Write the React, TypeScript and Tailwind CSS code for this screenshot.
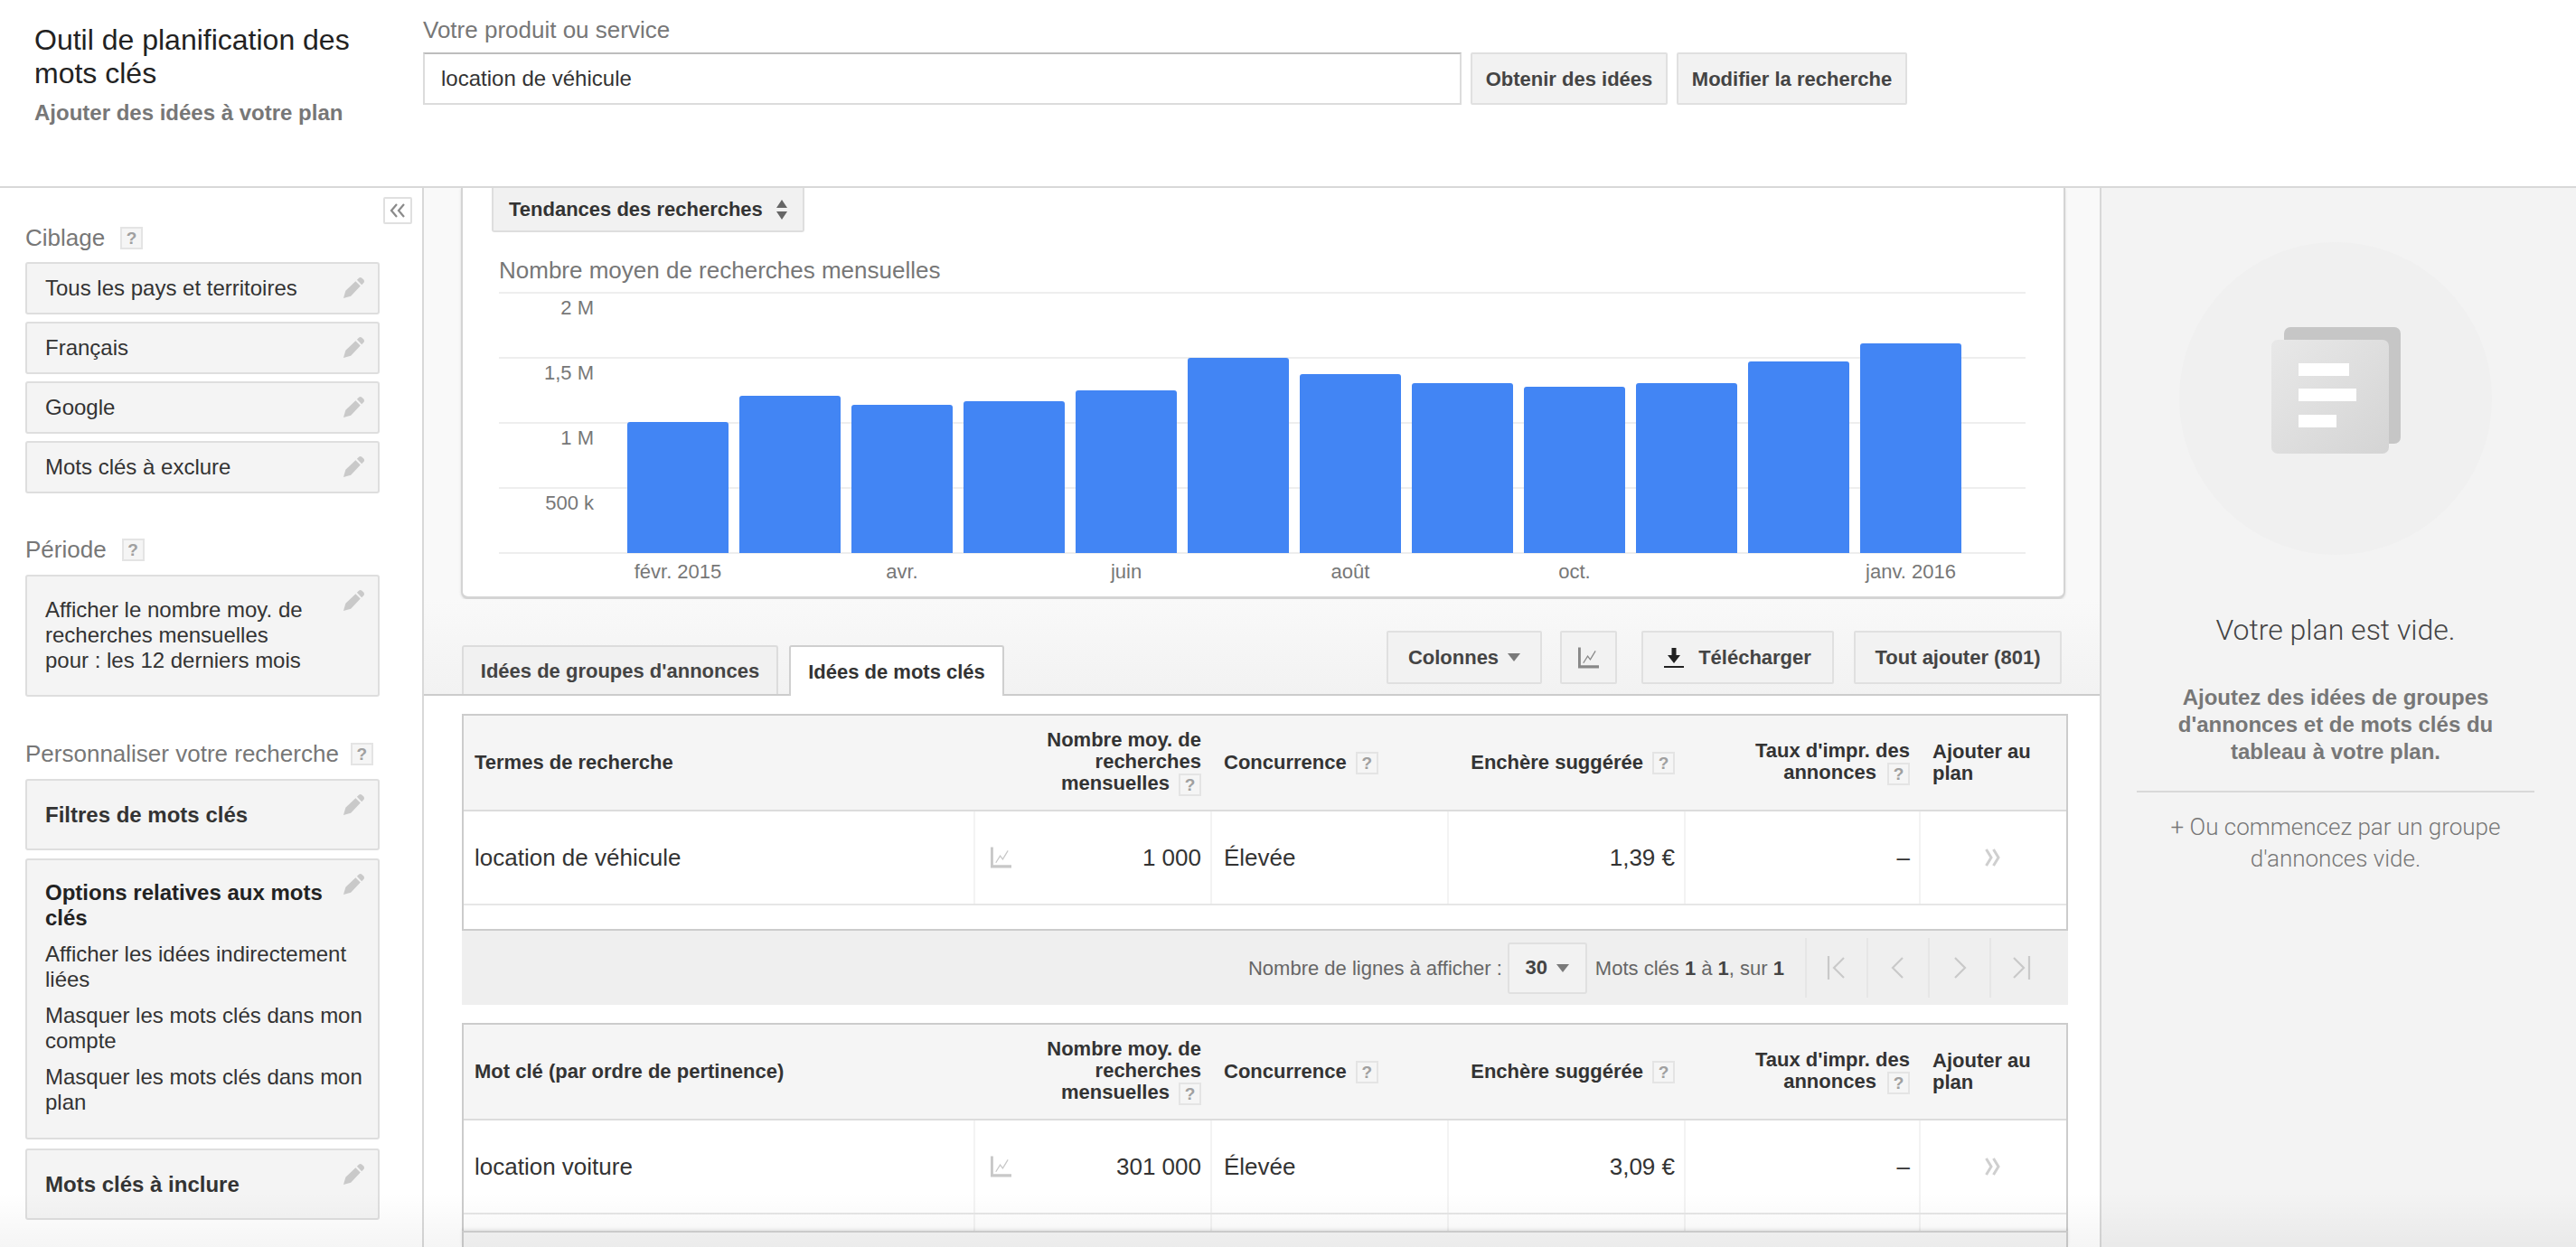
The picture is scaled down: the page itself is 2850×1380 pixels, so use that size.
import React from "react";

const Help = ({ className = "" }: { className?: string }) => (
  <span className={`inline-flex h-[25px] w-[25px] items-center justify-center border-2 border-[#e4e4e4] bg-[#f5f5f5] align-middle text-[19px] leading-none font-bold text-[#a0a0a0] ${className}`}>?</span>
);

const Pencil = () => (
  <svg viewBox="0 0 26 26" className="absolute top-[14px] right-[14px] h-[25px] w-[25px] fill-[#c9c9c9]">
    <path d="M1 25 L3.5 16.5 L15 5.5 L20.5 11 L9.5 22.5 Z" />
    <path d="M16.5 4 L19 1.5 Q20.5 0.5 22 1.5 L24.5 4 Q25.5 5.5 24.5 7 L22 9.5 Z" />
  </svg>
);

const Trend = ({ className = "" }: { className?: string }) => (
  <svg viewBox="0 0 24 24" className={`h-[24px] w-[23px] ${className}`}>
    <path d="M0 0h3v20.5h21V24H0z" fill="currentColor" />
    <polyline points="6,18 11,10 14,14 20,4" fill="none" stroke="currentColor" strokeWidth="1.3" />
  </svg>
);

const Caret = ({ className = "" }: { className?: string }) => (
  <svg viewBox="0 0 14 9" className={`h-[9px] w-[14px] ${className}`}>
    <path d="M0 0h14L7 9z" fill="#7a7a7a" />
  </svg>
);

const DoubleChevron = () => (
  <svg viewBox="0 0 17 20" className="h-[20px] w-[17px]">
    <path d="M1.5 1 L7 10 L1.5 19 M9.5 1 L15 10 L9.5 19" fill="none" stroke="#cfcfcf" strokeWidth="3" />
  </svg>
);

const SideItem = ({ children, className = "" }: { children: React.ReactNode; className?: string }) => (
  <div className={`relative w-[392px] rounded-[3px] border-2 border-[#dedede] bg-[#f4f4f4] pr-[16px] pl-[20px] text-[24px] leading-[28px] text-[#333] ${className}`}>
    {children}
    <Pencil />
  </div>
);

const Heading = ({ children, className = "" }: { children: React.ReactNode; className?: string }) => (
  <div className={`flex h-[30px] items-center text-[26px] leading-[30px] whitespace-nowrap text-[#777] ${className}`}>
    {children}
  </div>
);

const Btn = ({ children, className = "" }: { children: React.ReactNode; className?: string }) => (
  <div className={`flex items-center justify-center rounded-[2px] border-2 border-[#e0e0e0] bg-[#f2f2f2] text-[22px] font-bold whitespace-nowrap text-[#444] ${className}`}>
    {children}
  </div>
);

const ColHeader = ({ first }: { first: string }) => (
  <div className="flex h-[106px] border-b-2 border-[#dcdcdc] bg-[#f5f5f5] text-[22px] leading-[24px] font-bold text-[#333]">
    <div className="flex w-[566px] items-center pl-[12px]">{first}</div>
    <div className="flex w-[262px] items-center justify-end pr-[12px] text-right">
      <div>
        Nombre moy. de<br />recherches<br />mensuelles <Help className="ml-[4px]" />
      </div>
    </div>
    <div className="flex w-[262px] items-center pl-[13px]">
      <span>Concurrence</span>
      <Help className="ml-[10px]" />
    </div>
    <div className="flex w-[262px] items-center justify-end pr-[12px]">
      <span>Enchère suggérée</span>
      <Help className="ml-[10px]" />
    </div>
    <div className="flex w-[260px] items-center justify-end pr-[12px] text-right">
      <div>
        Taux d'impr. des<br />annonces <Help className="ml-[6px]" />
      </div>
    </div>
    <div className="flex flex-1 items-center pl-[13px]">
      <div>Ajouter au<br />plan</div>
    </div>
  </div>
);

const DataRow = ({ term, n, bid }: { term: string; n: string; bid: string }) => (
  <div className="flex h-[104px] border-b-2 border-[#e6e6e6] text-[26px] text-[#333]">
    <div className="flex w-[566px] items-center border-r-2 border-[#f3f3f3] pl-[12px]">{term}</div>
    <div className="flex w-[262px] items-center justify-between border-r-2 border-[#f3f3f3] pr-[10px] pl-[17px]">
      <Trend className="text-[#c8c8c8]" />
      <span>{n}</span>
    </div>
    <div className="flex w-[262px] items-center border-r-2 border-[#f3f3f3] pl-[13px]">Élevée</div>
    <div className="flex w-[262px] items-center justify-end border-r-2 border-[#f3f3f3] pr-[10px]">{bid}</div>
    <div className="flex w-[260px] items-center justify-end border-r-2 border-[#f3f3f3] pr-[10px]">–</div>
    <div className="flex flex-1 items-center justify-center pr-[2px]"><DoubleChevron /></div>
  </div>
);

const PageBtn = ({ d }: { d: string }) => (
  <div className="flex h-[66px] w-[68px] items-center justify-center border-l-2 border-[#e6e6e6]">
    <svg viewBox="0 0 28 28" className="h-[28px] w-[28px]">
      <path d={d} fill="none" stroke="#c9c9c9" strokeWidth="2.2" />
    </svg>
  </div>
);

const bars = [467, 438, 448, 444, 432, 396, 414, 424, 428, 424, 400, 380];
const xLabels: [string, number][] = [["févr. 2015", 750], ["avr.", 998], ["juin", 1246], ["août", 1494], ["oct.", 1742], ["janv. 2016", 2114]];
const yLabels: [string, number][] = [["2 M", 348], ["1,5 M", 420], ["1 M", 492], ["500 k", 564]];

const Chart = () => (
  <svg viewBox="552 316 1700 340" className="ml-[40px] h-[340px] w-[1700px] fill-[#777] text-[22px]">
    {[324, 396, 468, 540, 612].map((y) => (
      <rect key={y} x="552" y={y - 1} width="1689" height="2" fill="#eeeeee" />
    ))}
    {bars.map((top, i) => (
      <path
        key={i}
        d={`M${694 + 124 * i} 612V${top + 3}q0-3 3-3h106q3 0 3 3V612z`}
        fill="#4285f4"
      />
    ))}
    {yLabels.map(([t, y]) => (
      <text key={t} x="657" y={y} textAnchor="end">{t}</text>
    ))}
    {xLabels.map(([t, x]) => (
      <text key={t} x={x} y="640" textAnchor="middle">{t}</text>
    ))}
  </svg>
);

export default function App() {
  return (
    <div className="relative flex h-[1380px] w-[2850px] flex-col overflow-hidden bg-white font-['Liberation_Sans',Arial,sans-serif]">
      {/* top bar */}
      <header className="flex h-[208px] shrink-0 border-b-2 border-[#d8d8d8]">
        <div className="w-[468px] shrink-0 pt-[26px] pl-[38px]">
          <div className="text-[32px] leading-[37px] text-[#222]">Outil de planification des<br />mots clés</div>
          <div className="mt-[10px] text-[24px] leading-[30px] font-bold whitespace-nowrap text-[#777]">Ajouter des idées à votre plan</div>
        </div>
        <div className="pt-[18px]">
          <div className="mb-[10px] text-[26px] leading-[30px] text-[#777]">Votre produit ou service</div>
          <div className="flex gap-[10px]">
            <div className="flex h-[58px] w-[1149px] items-center border-2 border-[#dcdcdc] border-t-[#bdbdbd] pl-[18px] text-[24px] text-[#333]">location de véhicule</div>
            <Btn className="h-[58px] w-[218px]">Obtenir des idées</Btn>
            <Btn className="h-[58px] w-[255px]">Modifier la recherche</Btn>
          </div>
        </div>
      </header>

      <div className="flex min-h-0 flex-1">
        {/* sidebar */}
        <aside className="relative w-[469px] shrink-0 border-r-2 border-[#d8d8d8] pt-[40px] pl-[28px]">
          <div className="absolute top-[10px] left-[424px] flex h-[30px] w-[32px] items-center justify-center rounded-[2px] border-2 border-[#e0e0e0] bg-white">
            <svg viewBox="0 0 18 16" className="h-[16px] w-[18px]">
              <path d="M8 1 L2 8 L8 15 M16 1 L10 8 L16 15" fill="none" stroke="#8a8a8a" strokeWidth="2.2" />
            </svg>
          </div>
          <Heading className="mb-[12px]">Ciblage<Help className="ml-[17px]" /></Heading>
          <div className="flex flex-col gap-[8px]">
            {["Tous les pays et territoires", "Français", "Google", "Mots clés à exclure"].map((t) => (
              <SideItem key={t} className="flex h-[58px] items-center">{t}</SideItem>
            ))}
          </div>
          <Heading className="mt-[47px] mb-[13px]">Période<Help className="ml-[17px]" /></Heading>
          <SideItem className="h-[135px] pt-[23px]">
            Afficher le nombre moy. de<br />recherches mensuelles<br />pour : les 12 derniers mois
          </SideItem>
          <Heading className="mt-[48px] mb-[13px]">Personnaliser votre recherche<Help className="ml-[13px]" /></Heading>
          <SideItem className="flex h-[79px] items-center font-bold text-[#222]">Filtres de mots clés</SideItem>
          <SideItem className="mt-[9px] h-[311px] pt-[22px]">
            <div className="pr-[24px] font-bold text-[#222]">Options relatives aux mots clés</div>
            <div className="mt-[12px] flex flex-col gap-[12px] pr-[0px]">
              <div>Afficher les idées indirectement liées</div>
              <div>Masquer les mots clés dans mon compte</div>
              <div>Masquer les mots clés dans mon plan</div>
            </div>
          </SideItem>
          <SideItem className="mt-[10px] flex h-[79px] items-center font-bold text-[#222]">Mots clés à inclure</SideItem>
        </aside>

        {/* main column */}
        <main className="relative w-[1856px] shrink-0 overflow-hidden border-r-2 border-[#d8d8d8] bg-white">
          <div className="bg-[#f9f9f9] pt-[0px]">
            <div className="ml-[41px] h-[455px] w-[1775px] rounded-b-[8px] border-x-2 border-b-[3px] border-[#d4d4d4] bg-white shadow-[0_1px_3px_rgba(0,0,0,0.12)]">
              <div className="ml-[32px] flex h-[49px] w-[346px] items-center rounded-b-[3px] border-x-2 border-b-2 border-[#dedede] bg-[#f1f1f1] pl-[17px] text-[22px] font-bold whitespace-nowrap text-[#333]">
                Tendances des recherches
                <svg viewBox="0 0 14 24" className="ml-[14px] h-[24px] w-[14px]">
                  <path d="M7 1 L13 10 H1z M1 14 H13 L7 23z" fill="#666" />
                </svg>
              </div>
              <div className="mt-[27px] ml-[40px] text-[26px] leading-[30px] text-[#777]">Nombre moyen de recherches mensuelles</div>
              <div className="mt-[2px]"><Chart /></div>
            </div>
            <div className="flex h-[107px] items-end border-b-2 border-[#cccccc] bg-linear-to-b from-[#f9f9f9] to-[#f2f2f2] pl-[42px]">
              <div className="flex gap-[12px]">
                <div className="flex h-[54px] w-[350px] items-center justify-center rounded-t-[3px] border-x-2 border-t-2 border-[#dcdcdc] bg-[#f1f1f1] text-[22px] font-bold whitespace-nowrap text-[#444]">Idées de groupes d'annonces</div>
                <div className="-mb-[2px] flex h-[56px] w-[238px] items-center justify-center rounded-t-[3px] border-x-2 border-t-2 border-[#cfcfcf] bg-white text-[22px] font-bold whitespace-nowrap text-[#333]">Idées de mots clés</div>
              </div>
              <div className="mr-[42px] mb-[11px] ml-auto flex">
                <Btn className="h-[59px] w-[172px] gap-[10px]">Colonnes<Caret /></Btn>
                <Btn className="ml-[20px] h-[59px] w-[63px]"><Trend className="text-[#888]" /></Btn>
                <Btn className="ml-[27px] h-[59px] w-[213px] gap-[16px]">
                  <svg viewBox="0 0 22 22" className="h-[22px] w-[22px]">
                    <path d="M8.5 0h5v8H18l-7 9-7-9h4.5zM0 20h22v2.5H0z" fill="#222" />
                  </svg>
                  Télécharger
                </Btn>
                <Btn className="ml-[22px] h-[59px] w-[230px]">Tout ajouter (801)</Btn>
              </div>
            </div>
          </div>

          <div className="pt-[20px] pl-[42px]">
            <div className="h-[240px] w-[1777px] border-2 border-[#cccccc]">
              <ColHeader first="Termes de recherche" />
              <DataRow term="location de véhicule" n="1 000" bid="1,39 €" />
            </div>
            <div className="flex h-[82px] w-[1777px] items-center justify-end bg-[#efefef] pr-[19px] text-[22px] text-[#666]">
              <span className="whitespace-nowrap">Nombre de lignes à afficher :</span>
              <div className="ml-[6px] flex h-[57px] w-[88px] items-start justify-center gap-[10px] rounded-[3px] border-2 border-[#e0e0e0] bg-[#f2f2f2] pt-[14px] leading-[24px] font-bold text-[#444]">
                30<Caret className="mt-[8px]" />
              </div>
              <span className="mr-[23px] ml-[9px] whitespace-nowrap">Mots clés <b className="text-[#444]">1</b> à <b className="text-[#444]">1</b>, sur <b className="text-[#444]">1</b></span>
              <PageBtn d="M5 1v26M22 3L11 14l11 11" />
              <PageBtn d="M19 3L8 14l11 11" />
              <PageBtn d="M9 3l11 11L9 25" />
              <PageBtn d="M6 3l11 11L6 25M23 1v26" />
            </div>
            <div className="mt-[20px] w-[1777px] border-x-2 border-t-2 border-[#cccccc]">
              <ColHeader first="Mot clé (par ordre de pertinence)" />
              <DataRow term="location voiture" n="301 000" bid="3,09 €" />
              <div className="flex h-[60px]">
                <div className="w-[566px] border-r-2 border-[#f3f3f3]" />
                <div className="w-[262px] border-r-2 border-[#f3f3f3]" />
                <div className="w-[262px] border-r-2 border-[#f3f3f3]" />
                <div className="w-[262px] border-r-2 border-[#f3f3f3]" />
                <div className="w-[260px] border-r-2 border-[#f3f3f3]" />
              </div>
            </div>
          </div>
          <div className="absolute bottom-0 left-[42px] h-[18px] w-[1777px] border-x-2 border-t-2 border-x-[#cccccc] border-t-[#d0d0d0] bg-[#f5f5f5] shadow-[0_-2px_3px_rgba(0,0,0,0.08)]" />
        </main>

        {/* plan panel */}
        <section className="flex min-w-0 flex-1 flex-col items-center bg-[#f3f3f3] pr-[7px]">
          <svg viewBox="0 0 346 346" className="mt-[60px] h-[346px] w-[346px] shrink-0">
            <defs>
              <linearGradient id="frontCard" x1="0" y1="0" x2="1" y2="1">
                <stop offset="0" stopColor="#e8e8e8" />
                <stop offset="1" stopColor="#d4d4d4" />
              </linearGradient>
            </defs>
            <circle cx="173" cy="173" r="173" fill="#f0f0f0" />
            <rect x="116" y="94" width="129" height="129" rx="7" fill="#c6c6c6" />
            <rect x="102" y="108" width="130" height="126" rx="7" fill="url(#frontCard)" />
            <rect x="132" y="134" width="56" height="14" fill="#fff" />
            <rect x="132" y="162" width="64" height="14" fill="#fff" />
            <rect x="132" y="191" width="42" height="14" fill="#fff" />
          </svg>
          <div className="mt-[63px] font-['Roboto',sans-serif] text-[32px] leading-[40px] font-light text-[#444]">Votre plan est vide.</div>
          <div className="mt-[40px] text-center text-[24px] leading-[30px] font-bold text-[#777]">
            Ajoutez des idées de groupes<br />d'annonces et de mots clés du<br />tableau à votre plan.
          </div>
          <div className="mt-[28px] h-[2px] w-[440px] bg-[#d8d8d8]" />
          <div className="mt-[21px] text-center font-['Roboto',sans-serif] text-[26px] leading-[35px] font-light text-[#777]">
            + Ou commencez par un groupe<br />d'annonces vide.
          </div>
        </section>
      </div>

      {/* fade at the bottom of the window */}
      <div className="pointer-events-none absolute right-0 bottom-0 left-0 h-[60px] bg-linear-to-b from-transparent to-[rgba(0,0,0,0.04)]" />
    </div>
  );
}
